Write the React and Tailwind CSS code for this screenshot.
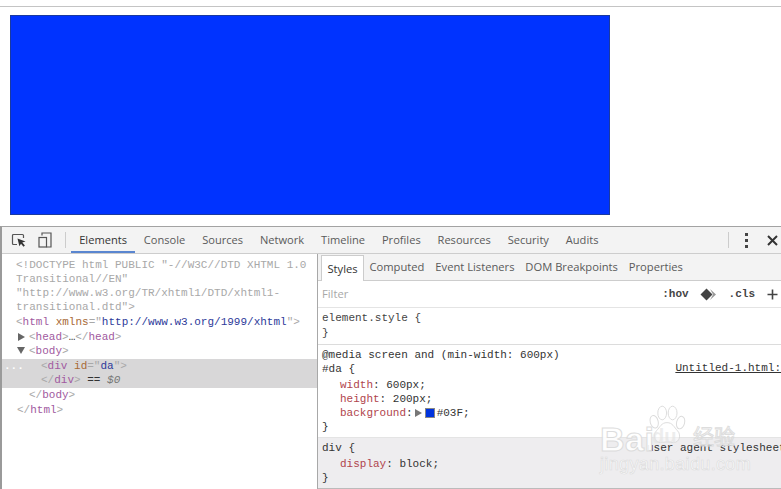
const mono = "font-['Liberation_Mono','DejaVu_Sans_Mono',monospace] text-[11px] leading-[14.6px]";
const sans = "font-['Open_Sans','Noto_Sans',sans-serif] text-[11.2px]";

const T = ({ c, children }) => <span className={c}>{children}</span>;
const tag = "text-[#a15aa0]";
const br = "text-[#a8a8a8]";
const attr = "text-[#a86a35]";
const val = "text-[#2d3a9a]";
const prop = "text-[#b0444c]";

function TopTab({ children, active }) {
  return (
    <div className={`h-full flex items-center px-[8.45px] text-[11.1px] pt-[1px] ${active ? "border-b-2 border-[#5a86d0] text-[#333] pt-[3px]" : "text-[#5a5a5a]"}`}>
      {children}
    </div>
  );
}

function SubTab({ children, active }) {
  return (
    <div className={`h-full flex items-center text-[11.2px] px-[5.45px] pt-[1px] ${active ? "bg-white border border-b-0 border-[#ccc] text-[#333] mt-[1px] -mb-px" : "text-[#5a5a5a]"}`}>
      {children}
    </div>
  );
}

function Line({ pl, className = "", children }) {
  return <div className={`whitespace-nowrap ${pl} ${className}`}>{children}</div>;
}

function Watermark() {
  return (
    <div className="absolute left-[598px] top-[402px] w-[150px] h-[72px] pointer-events-none font-['Liberation_Sans',sans-serif] text-white opacity-90">
      <span className="absolute left-[2px] top-[20px] text-[34px] leading-[34px] tracking-[0.5px] font-bold [-webkit-text-stroke:1px_#dadada]">Bai</span>
      <svg className="absolute left-[47px] top-[3px]" width="44" height="40" viewBox="0 0 50 50" fill="#fff" fillOpacity="0.5" stroke="#d8d8d8" strokeWidth="1.2">
        <ellipse cx="9" cy="21" rx="5" ry="8" transform="rotate(-15 9 21)" />
        <ellipse cx="19" cy="10" rx="5.5" ry="8.5" />
        <ellipse cx="32" cy="10" rx="5.5" ry="8.5" />
        <ellipse cx="42" cy="22" rx="5" ry="8" transform="rotate(15 42 22)" />
        <path d="M25 22c-7 0-9 6-13 10-5 5-3 15 5 15 3 0 5-1 8-1s5 1 8 1c8 0 10-10 5-15-4-4-6-10-13-10z" />
      </svg>
      <span className="absolute left-[54px] top-[24px] text-[20px] leading-[20px] font-bold text-[#e4e4e4]/70">du</span>
      <span className="absolute left-[95px] top-[21px] text-[21px] leading-[24px] font-['Noto_Sans_CJK_SC',sans-serif] text-white/70 [-webkit-text-stroke:1px_#dadada]">经验</span>
      <span className="absolute left-[2px] top-[52px] text-[18px] leading-[20px] tracking-[0.35px] [-webkit-text-stroke:0.7px_#dcdcdc]">jingyan.baidu.com</span>
    </div>
  );
}

export default function App() {
  return (
    <div className="relative w-[781px] h-[489px] overflow-hidden bg-white font-['Open_Sans','Noto_Sans',sans-serif] flex flex-col">
      {/* page */}
      <div className="h-[226px] shrink-0 flex flex-col">
        <div className="h-[7px] border-b border-[#c4c4c4] shrink-0" />
        <div className="pl-[10px] pt-[8px]">
          <div className="w-[600px] h-[200px] bg-[#0033ff] border border-[#1a3aa0]" />
        </div>
      </div>

      {/* devtools */}
      <div className="flex-1 min-h-0 flex flex-col border-t border-[#a3a3a3] border-l-2 border-l-[#9a9a9a]">
        <div className="h-[27px] shrink-0 bg-[#f3f3f3] border-b border-[#cdcdcd] flex items-center">
          <div className="h-full flex items-center pl-[9px] gap-[11px] w-[63px] shrink-0">
            <svg width="16" height="16" viewBox="0 0 16 16" fill="none">
              <path d="M6 12.5H2.5a1 1 0 0 1-1-1v-8a1 1 0 0 1 1-1h9a1 1 0 0 1 1 1V6" stroke="#555" strokeWidth="1.2" />
              <path d="M6.5 6.5l8 3-3.2 1 2.6 3-1.4 1.2-2.5-3-1.6 2.6z" fill="#333" />
            </svg>
            <svg width="14" height="16" viewBox="0 0 14 16" fill="none">
              <rect x="1" y="5.5" width="7.5" height="9.5" stroke="#555" strokeWidth="1.2" />
              <path d="M4 3.5V1h9v14H8.5" stroke="#555" strokeWidth="1.2" />
            </svg>
          </div>
          <div className="w-px h-[16px] bg-[#ccc] mr-[4.75px]" />
          <TopTab active>Elements</TopTab>
          <TopTab>Console</TopTab>
          <TopTab>Sources</TopTab>
          <TopTab>Network</TopTab>
          <TopTab>Timeline</TopTab>
          <TopTab>Profiles</TopTab>
          <TopTab>Resources</TopTab>
          <TopTab>Security</TopTab>
          <TopTab>Audits</TopTab>
          <div className="flex-1" />
          <div className="w-px h-[16px] bg-[#ccc]" />
          <div className="flex flex-col gap-[3px] ml-[16px]">
            <div className="w-[3px] h-[3px] bg-[#444]" />
            <div className="w-[3px] h-[3px] bg-[#444]" />
            <div className="w-[3px] h-[3px] bg-[#444]" />
          </div>
          <svg className="ml-[19px] mr-[3px]" width="11" height="11" viewBox="0 0 11 11" stroke="#333" strokeWidth="2">
            <path d="M1 1l9 9M10 1l-9 9" />
          </svg>
        </div>

        <div className="flex-1 min-h-0 flex">
          {/* elements */}
          <div className={`w-[315px] shrink-0 pt-[4px] text-[#333] ${mono}`}>
            <div className="pl-[14px] text-[#a8a8a8] pr-1 leading-[14px]">
              <div className="whitespace-nowrap">{'<!DOCTYPE html PUBLIC "-//W3C//DTD XHTML 1.0'}</div>
              <div className="whitespace-nowrap">{'Transitional//EN"'}</div>
              <div className="whitespace-nowrap">{'"http://www.w3.org/TR/xhtml1/DTD/xhtml1-'}</div>
              <div className="whitespace-nowrap">{'transitional.dtd">'}</div>
            </div>
            <div className="mt-[1px]">
              <Line pl="pl-[14px]"><T c={br}>&lt;</T><T c={tag}>html</T> <T c={attr}>xmlns</T><T c={br}>="</T><T c={val}>http://www.w3.org/1999/xhtml</T><T c={br}>"&gt;</T></Line>
              <Line pl="pl-[16px] relative">
                <span className="absolute left-[16px] top-[3px] w-0 h-0 border-y-[4px] border-y-transparent border-l-[7px] border-l-[#666]" />
                <span className="ml-[11px]"><T c={br}>&lt;</T><T c={tag}>head</T><T c={br}>&gt;</T>…<T c={br}>&lt;/</T><T c={tag}>head</T><T c={br}>&gt;</T></span>
              </Line>
              <Line pl="pl-[16px] relative">
                <span className="absolute left-[15px] top-[3px] w-0 h-0 border-x-[4px] border-x-transparent border-t-[7px] border-t-[#666]" />
                <span className="ml-[11px]"><T c={br}>&lt;</T><T c={tag}>body</T><T c={br}>&gt;</T></span>
              </Line>
              <div className="bg-[#d8d7d8] relative">
                <span className="absolute left-[2px] top-[1px] text-white font-bold leading-[12px]">...</span>
                <Line pl="pl-[39px]"><T c={br}>&lt;</T><T c={tag}>div</T> <T c={attr}>id</T><T c={br}>="</T><T c={val}>da</T><T c={br}>"&gt;</T></Line>
                <Line pl="pl-[39px]"><T c={br}>&lt;/</T><T c={tag}>div</T><T c={br}>&gt;</T> == <span className="italic text-[#777]">$0</span></Line>
              </div>
              <Line pl="pl-[27px]"><T c={br}>&lt;/</T><T c={tag}>body</T><T c={br}>&gt;</T></Line>
              <Line pl="pl-[15px]"><T c={br}>&lt;/</T><T c={tag}>html</T><T c={br}>&gt;</T></Line>
            </div>
          </div>

          {/* styles */}
          <div className="flex-1 min-w-0 border-l border-[#a8a8a8] flex flex-col overflow-hidden">
            <div className="h-[27px] shrink-0 bg-[#f3f3f3] border-b border-[#cdcdcd] flex items-center pl-[3px]">
              <SubTab active>Styles</SubTab>
              <SubTab>Computed</SubTab>
              <SubTab>Event Listeners</SubTab>
              <SubTab>DOM Breakpoints</SubTab>
              <SubTab>Properties</SubTab>
            </div>
            <div className="h-[27px] shrink-0 border-b border-[#e4e4e4] flex items-center pl-[4px] pr-[3px] pt-[1px]">
              <span className={`${sans} text-[#a8a8a8]`}>Filter</span>
              <div className="flex-1" />
              <span className={`${mono} font-bold text-[#444]`}>:hov</span>
              <svg className="ml-[11px]" width="17" height="13" viewBox="0 0 17 13">
                <path d="M6.5 0.5l6 6-6 6-6-6z" fill="#444" />
                <path d="M10 1l6 5.5-6 5.5 3-5.5z" fill="#999" />
              </svg>
              <span className={`${mono} font-bold text-[#444] ml-[12px]`}>.cls</span>
              <svg className="ml-[12px]" width="11" height="11" viewBox="0 0 11 11" stroke="#444" strokeWidth="1.6">
                <path d="M5.5 0.5v10M0.5 5.5h10" />
              </svg>
            </div>

            <div className={`h-[37px] shrink-0 border-b border-[#dcdcdc] pl-[4px] pt-[3px] text-[#444] ${mono}`}>
              <div>element.style {"{"}</div>
              <div>{"}"}</div>
            </div>

            <div className={`h-[93px] shrink-0 border-b border-[#e4e4e4] pl-[4px] pt-[3px] text-[#333] ${mono} relative !leading-[14px]`}>
              <div>@media screen and (min-width: 600px)</div>
              <div>#da {"{"}</div>
              <div className="pl-[18px] pt-[2px]"><T c={prop}>width</T>: 600px;</div>
              <div className="pl-[18px]"><T c={prop}>height</T>: 200px;</div>
              <div className="pl-[18px] flex items-center">
                <T c={prop}>background</T>:
                <span className="ml-[2px] w-0 h-0 border-y-[4px] border-y-transparent border-l-[7px] border-l-[#777]" />
                <span className="ml-[3px] w-[10px] h-[10px] bg-[#0033dd] border border-[#888]" />
                <span className="ml-[2px]">#03F;</span>
              </div>
              <div>{"}"}</div>
              <span className="absolute right-0 top-[16px] underline whitespace-nowrap">Untitled-1.html:</span>
            </div>

            <div className={`flex-1 bg-[#eeedef] pl-[4px] pt-[3px] text-[#333] border-b border-[#bbb] relative ${mono}`}>
              <div>div {"{"}</div>
              <div className="pl-[18px] pt-[1px]"><T c={prop}>display</T>: block;</div>
              <div>{"}"}</div>
              <span className="absolute left-[329px] top-[3px] whitespace-nowrap">user agent stylesheet</span>
            </div>
          </div>
        </div>
      </div>

      <Watermark />
    </div>
  );
}
